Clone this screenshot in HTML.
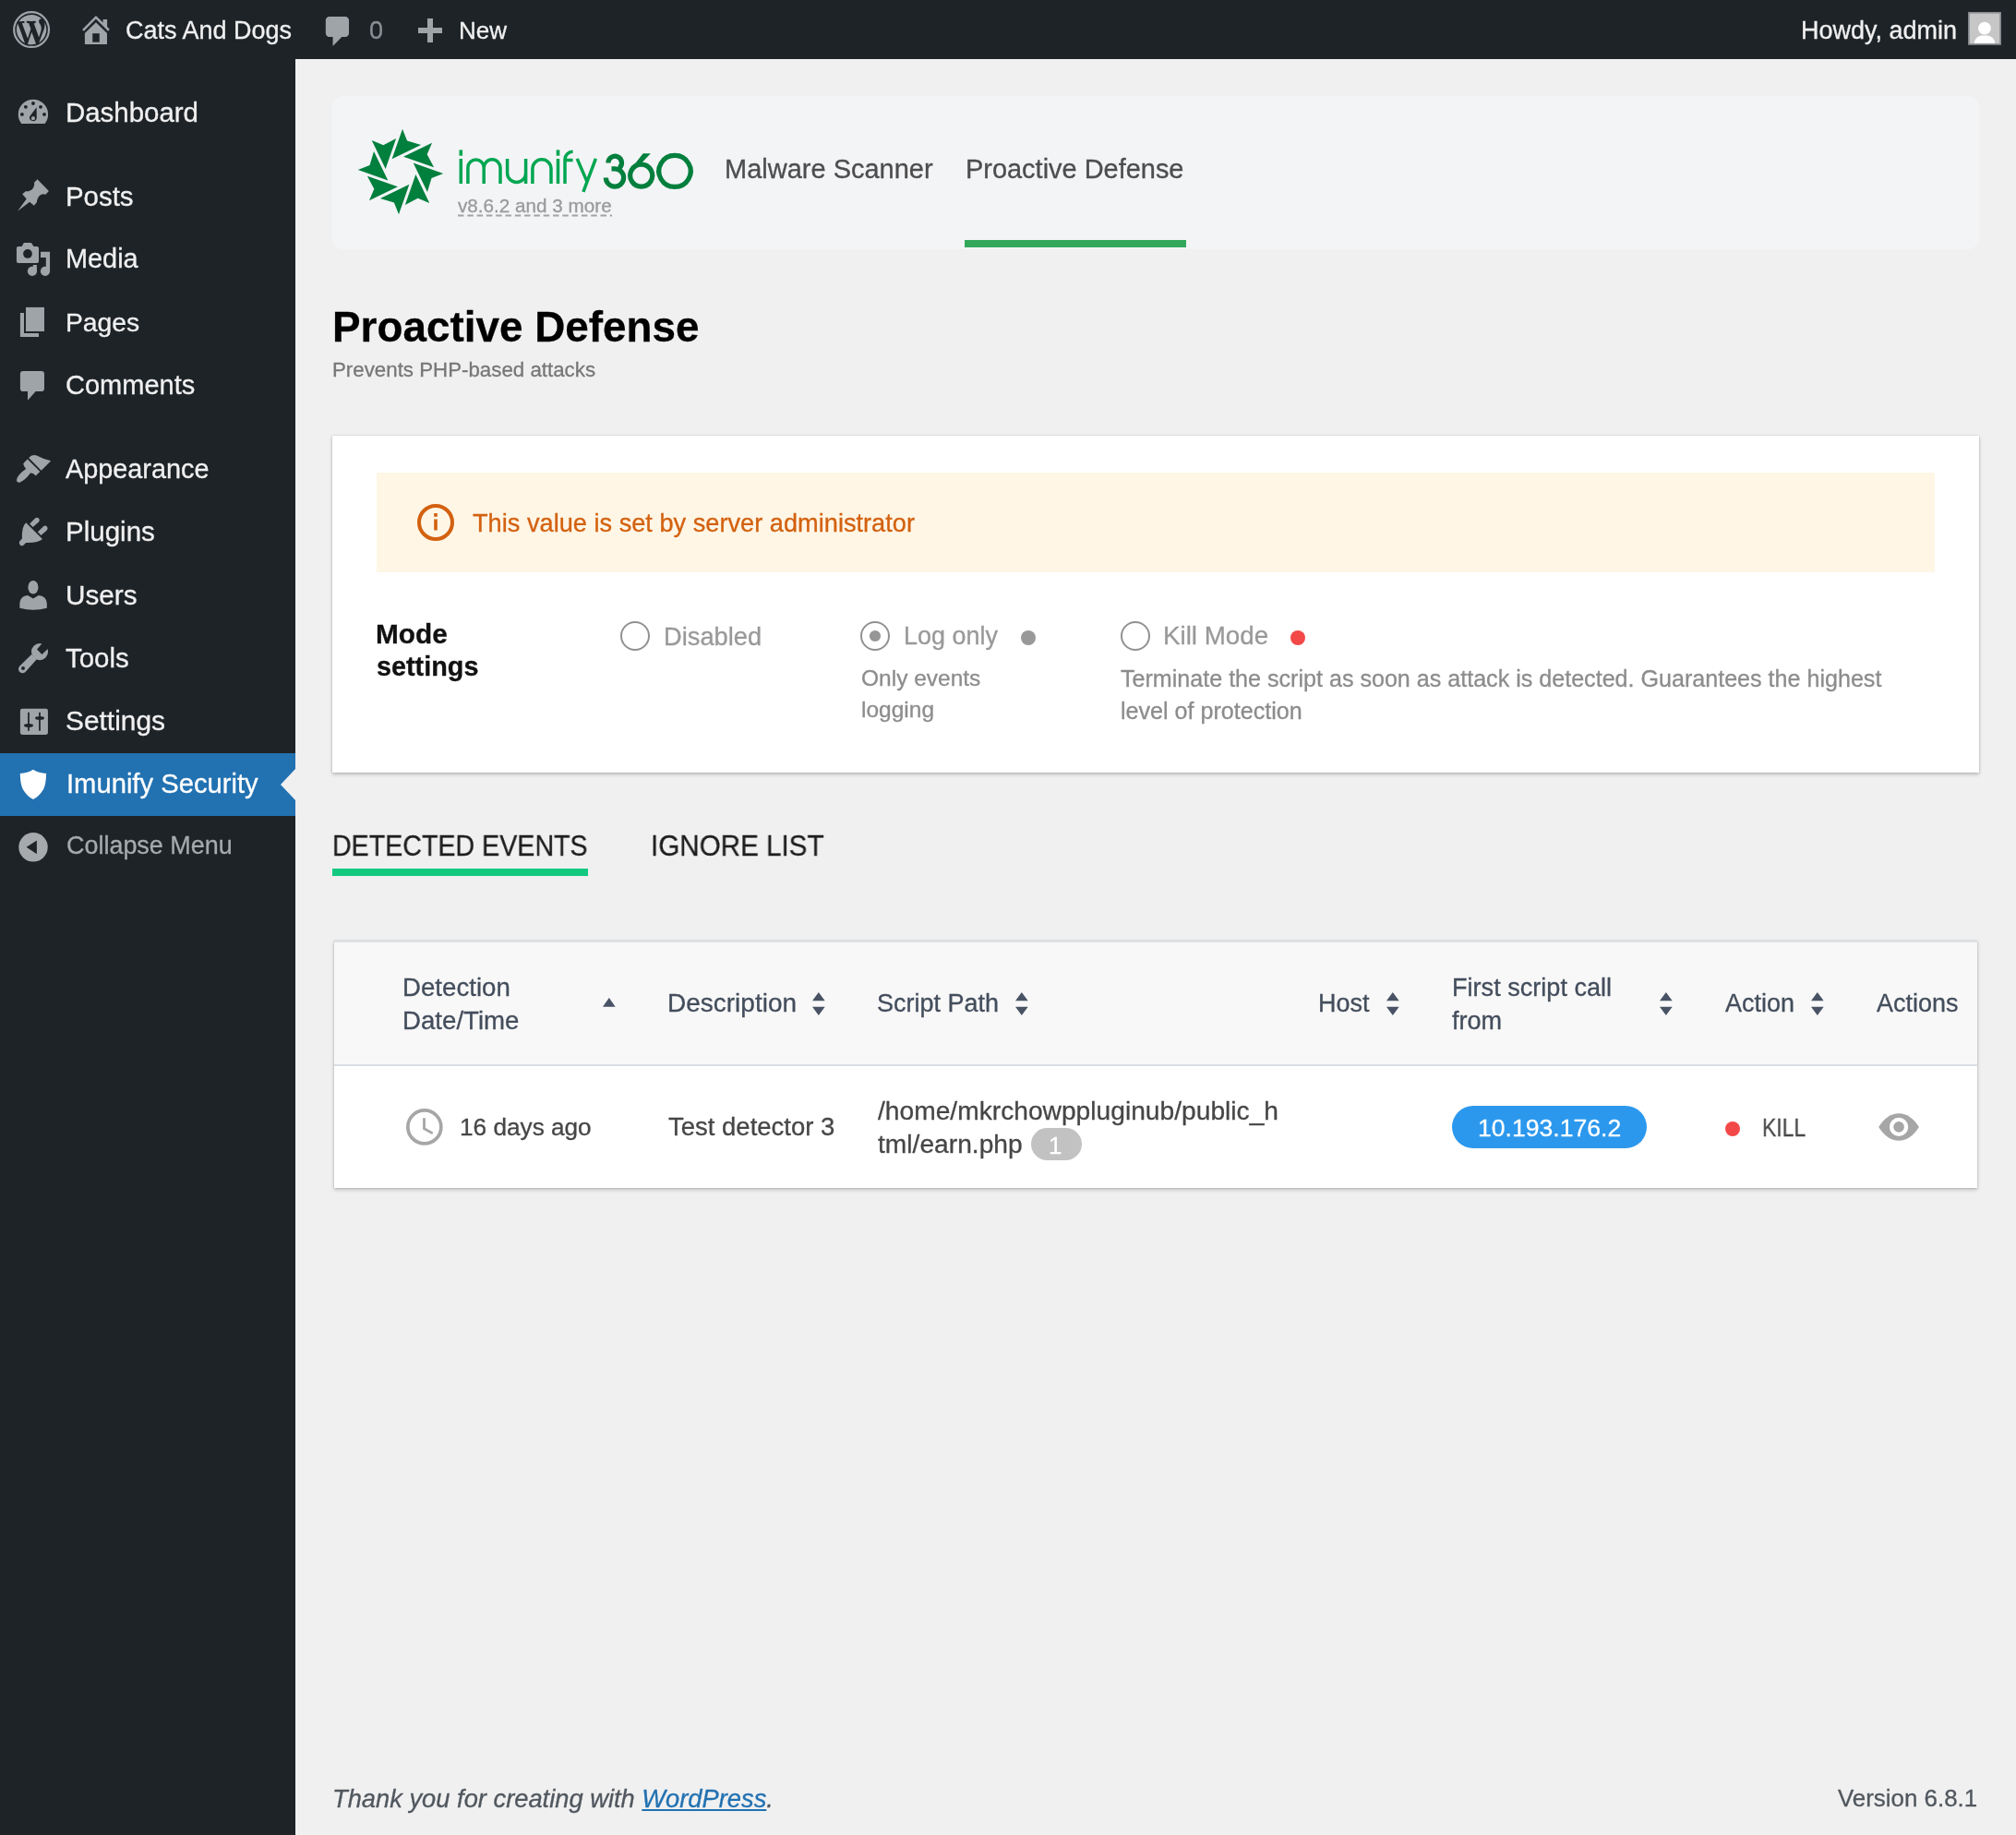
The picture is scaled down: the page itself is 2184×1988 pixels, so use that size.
<!DOCTYPE html>
<html><head><meta charset="utf-8"><title>Proactive Defense</title>
<style>
html,body{margin:0;padding:0;}
body{width:2184px;height:1988px;position:relative;overflow:hidden;background:#f0f0f1;font-family:"Liberation Sans",sans-serif;}
.t{position:absolute;white-space:nowrap;line-height:1;will-change:transform;-webkit-text-stroke:0.3px currentColor;}
.b{position:absolute;box-sizing:border-box;}
.i{position:absolute;overflow:visible;}
</style></head><body>
<div class="b" style="left:0px;top:0px;width:2184px;height:64px;background:#1d2327;"></div><svg class="i" style="left:13.8px;top:11.8px;" width="40.2" height="40.2" viewBox="0 0 20 20"><circle cx="10" cy="10" r="9.4" fill="none" stroke="#9fa4a9" stroke-width="1.12"/><path fill="#9fa4a9" transform="translate(10,10) scale(0.905) translate(-10,-10)" d="M7.78 15.37L4.37 6.22c.55-.02 1.17-.08 1.17-.08.5-.06.44-1.13-.06-1.11 0 0-1.45.11-2.37.11-.18 0-.37 0-.58-.01C4.12 2.69 6.87 1.11 10 1.11c2.33 0 4.45.87 6.05 2.34-.68-.11-1.65.39-1.65 1.58 0 .74.45 1.36.9 2.1.35.61.55 1.36.55 2.46 0 1.49-1.4 5-1.4 5l-3.03-8.37c.54-.02.82-.17.82-.17.5-.05.44-1.25-.06-1.22 0 0-1.44.12-2.38.12-.87 0-2.33-.12-2.33-.12-.5-.03-.56 1.2-.06 1.22l.92.08 1.26 3.41zM17.41 10c.24-.64.74-1.87.43-4.25.7 1.29 1.05 2.71 1.05 4.25 0 3.29-1.73 6.24-4.4 7.78.97-2.59 1.94-5.2 2.92-7.78zM6.1 18.09C3.12 16.65 1.11 13.53 1.11 10c0-1.3.23-2.48.72-3.59C3.25 10.3 4.67 14.2 6.1 18.09zM10.13 11.46l2.58 6.98c-.86.29-1.76.45-2.71.45-.79 0-1.57-.11-2.29-.33.81-2.38 1.62-4.74 2.42-7.1z"/></svg><svg class="i" style="left:78px;top:6px;" width="52" height="52" viewBox="0 0 1835 1835"><path fill="#9fa4a9" d="M915,385 L1185,655 L1185,525 L1345,525 L1345,815 L1440,910 L1380,980 L915,515 L455,980 L390,915 Z"/><path fill="#9fa4a9" d="M490,1060 L915,640 L1340,1060 L1340,1485 L490,1485 Z"/><rect fill="#1d2327" x="785" y="1065" width="265" height="335"/></svg><div class="t" style="left:136.0px;top:19.9px;font-size:27px;color:#f0f0f1;">Cats And Dogs</div><svg class="i" style="left:345px;top:14px;" width="40" height="40" viewBox="0 0 20 20"><path fill="#9fa4a9" d="M5 2h9c1.1 0 2 .9 2 2v7c0 1.1-.9 2-2 2h-2l-5 5v-5H5c-1.1 0-2-.9-2-2V4c0-1.1.9-2 2-2z" transform="translate(1,0) scale(0.97,1)"/></svg><div class="t" style="left:400.0px;top:20.1px;font-size:27px;color:#8c8f94;">0</div><div class="b" style="left:453px;top:30px;width:26px;height:6px;background:#9fa4a9;"></div><div class="b" style="left:463px;top:20px;width:6px;height:26px;background:#9fa4a9;"></div><div class="t" style="left:497.3px;top:20.0px;font-size:26px;color:#f0f0f1;">New</div><div class="t" style="right:64.4px;top:19.9px;font-size:27px;color:#f0f0f1;">Howdy, admin</div><svg class="i" style="left:2124px;top:6px;" width="52" height="52" viewBox="0 0 1835 1835"><rect x="285" y="245" width="1265" height="1265" fill="#8c8f94"/><rect x="345" y="305" width="1145" height="1145" fill="#c6c6c6"/><circle cx="915" cy="870" r="245" fill="#fff"/><path fill="#fff" d="M520,1450 Q540,1200 800,1150 L1030,1150 Q1290,1200 1320,1450 Z"/></svg><div class="b" style="left:0px;top:64px;width:320px;height:1924px;background:#1d2327;"></div><div class="b" style="left:0px;top:816px;width:320px;height:68.4px;background:#2271b1;"></div><svg class="i" style="left:304px;top:833px;" width="16" height="34" viewBox="0 0 16 34"><path fill="#f0f0f1" d="M16,0 L0,17 L16,34 Z"/></svg><div class="t" style="left:70.5px;top:107.1px;font-size:29.43px;color:#f0f0f1;">Dashboard</div><div class="t" style="left:70.5px;top:197.5px;font-size:29.43px;color:#f0f0f1;">Posts</div><div class="t" style="left:70.5px;top:266.4px;font-size:28.86px;color:#f0f0f1;">Media</div><div class="t" style="left:70.5px;top:335.2px;font-size:28.31px;color:#f0f0f1;">Pages</div><div class="t" style="left:70.5px;top:403.1px;font-size:29.0px;color:#f0f0f1;">Comments</div><div class="t" style="left:70.5px;top:493.6px;font-size:28.83px;color:#f0f0f1;">Appearance</div><div class="t" style="left:70.5px;top:561.4px;font-size:29.52px;color:#f0f0f1;">Plugins</div><div class="t" style="left:70.5px;top:629.7px;font-size:29.69px;color:#f0f0f1;">Users</div><div class="t" style="left:70.5px;top:698.3px;font-size:29.4px;color:#f0f0f1;">Tools</div><div class="t" style="left:70.5px;top:766.3px;font-size:29.89px;color:#f0f0f1;">Settings</div><div class="t" style="left:71.5px;top:835.3px;font-size:29.2px;color:#fff;">Imunify Security</div><div class="t" style="left:72.1px;top:903.2px;font-size:26.95px;color:#a7aaad;">Collapse Menu</div><svg class="i" style="left:10px;top:96px;" width="52" height="52" viewBox="0 0 1835 1835"><path fill="#9fa4a9" d="M469,1340 A570,570 0 1 1 1361,1340 Z"/><circle fill="#1d2327" cx="490" cy="985" r="68"/><circle fill="#1d2327" cx="630" cy="700" r="68"/><circle fill="#1d2327" cx="915" cy="565" r="68"/><circle fill="#1d2327" cx="1200" cy="700" r="68"/><circle fill="#1d2327" cx="1340" cy="985" r="68"/><path fill="#1d2327" d="M780,1070 L1045,715 L1050,1130 A135,135 0 1 1 780,1070 Z"/><circle fill="#9fa4a9" cx="915" cy="1135" r="72"/></svg><svg class="i" style="left:10px;top:186px;" width="52" height="52" viewBox="0 0 1835 1835"><path fill="#9fa4a9" d="M1075,290 L1515,745 L1390,870 Q1150,800 1060,1100 L1060,1160 L950,1300 L780,1160 L320,1505 L660,1040 L500,860 L640,740 L700,760 Q960,700 960,460 L950,420 Z"/></svg><svg class="i" style="left:10px;top:254px;" width="52" height="52" viewBox="0 0 1835 1835"><rect fill="#9fa4a9" x="280" y="460" width="850" height="635" rx="70"/><path fill="#9fa4a9" d="M470,480 L560,320 L840,320 L950,480 Z"/><circle fill="#1d2327" cx="705" cy="740" r="172"/><path fill="#9fa4a9" d="M1200,665 L1555,665 L1555,1420 L1405,1420 L1405,885 L1200,885 Z"/><circle fill="#9fa4a9" cx="1375" cy="1405" r="180"/><rect fill="#9fa4a9" x="910" y="1165" width="145" height="255"/><circle fill="#9fa4a9" cx="880" cy="1405" r="180"/></svg><svg class="i" style="left:10px;top:322px;" width="52" height="52" viewBox="0 0 1835 1835"><rect fill="#9fa4a9" x="635" y="385" width="705" height="920"/><path fill="#9fa4a9" d="M420,600 L565,600 L565,1380 L1130,1380 L1130,1520 L420,1520 Z"/></svg><svg class="i" style="left:10px;top:390px;" width="52" height="52" viewBox="0 0 1835 1835"><rect fill="#9fa4a9" x="420" y="420" width="920" height="780" rx="110"/><path fill="#9fa4a9" d="M705,1150 L705,1545 L1060,1150 Z"/></svg><svg class="i" style="left:10px;top:480px;" width="52" height="52" viewBox="0 0 1835 1835"><path fill="#9fa4a9" d="M745,565 Q860,420 1050,475 Q1300,610 1595,680 L1225,1050 Z"/><path fill="#9fa4a9" d="M700,615 L1175,1090 L1010,1255 Q930,1135 810,1150 Q620,1420 400,1505 Q270,1520 285,1395 Q330,1200 640,990 Q560,900 535,790 Q600,700 700,615 Z"/></svg><svg class="i" style="left:10px;top:548px;" width="52" height="52" viewBox="0 0 1835 1835"><path fill="#9fa4a9" d="M640,645 L1270,1270 Q1100,1425 640,1410 L530,1520 Q420,1560 380,1430 Q375,1360 490,1265 Q470,800 640,645 Z"/><path fill="#9fa4a9" d="M780,690 L990,480 Q1070,410 1140,490 Q1190,560 1120,630 L905,815 Z"/><path fill="#9fa4a9" d="M1090,1000 L1300,790 Q1380,720 1450,800 Q1500,870 1430,940 L1215,1125 Z"/></svg><svg class="i" style="left:10px;top:616px;" width="52" height="52" viewBox="0 0 1835 1835"><ellipse fill="#9fa4a9" cx="915" cy="715" rx="195" ry="258"/><path fill="#9fa4a9" d="M400,1510 L400,1320 Q420,1050 710,1020 L915,1150 L1120,1020 Q1420,1050 1440,1320 L1440,1510 Q915,1650 400,1510 Z"/></svg><svg class="i" style="left:10px;top:684px;" width="52" height="52" viewBox="0 0 1835 1835"><circle fill="#9fa4a9" cx="1165" cy="780" r="320"/><path fill="#1d2327" d="M1290,420 L1060,690 L1250,880 L1520,630 Z"/><path fill="#9fa4a9" d="M850,880 L1045,1075 L610,1560 Q480,1650 375,1525 Q310,1400 440,1290 Z"/><circle fill="#1d2327" cx="530" cy="1410" r="68"/></svg><svg class="i" style="left:10px;top:752px;" width="52" height="52" viewBox="0 0 1835 1835"><rect fill="#9fa4a9" x="420" y="560" width="1060" height="990" rx="75"/><rect fill="#1d2327" x="710" y="700" width="62" height="700" rx="10"/><ellipse fill="#1d2327" cx="740" cy="1200" rx="175" ry="68"/><rect fill="#1d2327" x="1133" y="700" width="62" height="700" rx="10"/><ellipse fill="#1d2327" cx="1165" cy="915" rx="175" ry="68"/></svg><svg class="i" style="left:10px;top:824px;" width="52" height="52" viewBox="0 0 1835 1835"><path fill="#fff" d="M915,345 Q700,480 415,495 Q420,900 520,1090 Q680,1360 915,1485 Q1150,1360 1310,1090 Q1410,900 1415,495 Q1130,480 915,345 Z"/></svg><svg class="i" style="left:10px;top:891px;" width="52" height="52" viewBox="0 0 1835 1835"><circle fill="#a7aaad" cx="918" cy="945" r="555"/><path fill="#1d2327" d="M655,945 L1055,690 L1055,1210 Z"/></svg><div class="b" style="left:360px;top:104px;width:1784px;height:165.6px;background:#f3f4f6;border-radius:12px;"></div><div class="b" style="left:1044.7px;top:259.9px;width:240px;height:7.9px;background:#34a85a;"></div><svg class="i" style="left:383.71px;top:136.41px;" width="100" height="100" viewBox="-50 -50 100 100"><g fill="#007f3d"><path d="M2.01,-46.2 L7.06,-33.48 L22.1,-28.97 L-9.4,-13.7 Z" transform="rotate(0)"/><path d="M2.01,-46.2 L7.06,-33.48 L22.1,-28.97 L-9.4,-13.7 Z" transform="rotate(45)"/><path d="M2.01,-46.2 L7.06,-33.48 L22.1,-28.97 L-9.4,-13.7 Z" transform="rotate(90)"/><path d="M2.01,-46.2 L7.06,-33.48 L22.1,-28.97 L-9.4,-13.7 Z" transform="rotate(135)"/><path d="M2.01,-46.2 L7.06,-33.48 L22.1,-28.97 L-9.4,-13.7 Z" transform="rotate(180)"/><path d="M2.01,-46.2 L7.06,-33.48 L22.1,-28.97 L-9.4,-13.7 Z" transform="rotate(225)"/><path d="M2.01,-46.2 L7.06,-33.48 L22.1,-28.97 L-9.4,-13.7 Z" transform="rotate(270)"/><path d="M2.01,-46.2 L7.06,-33.48 L22.1,-28.97 L-9.4,-13.7 Z" transform="rotate(315)"/></g></svg><svg class="i" style="left:0px;top:0px;pointer-events:none;" width="2184" height="300" viewBox="0 0 2184 300"><path d="M499.3,171.9 V198.9 M506.9,198.9 V181.7 A8.65,8.65 0 0 1 524.2,181.7 V198.9 M524.2,181.7 A8.9,8.9 0 0 1 542,181.7 V198.9 M549.6,171.9 V187.5 A10,10 0 0 0 569.6,187.5 M569.6,171.9 V198.9 M576.9,198.9 V182.9 A10.05,10.05 0 0 1 597,182.9 V198.9 M604.5,171.9 V198.9 M612,198.9 V172.8 A8.6,8.6 0 0 1 620.6,164.2 M613,173.5 H620.6 M625.2,171.9 L636.2,197.4 M645.4,171.9 L631.9,207.9" fill="none" stroke="#00a651" stroke-width="3.5"/><g fill="#00a651"><rect x="497.5" y="162.4" width="3.6" height="6.3"/><rect x="602.7" y="162.4" width="3.6" height="6.3"/></g><path d="M658.9,176.5 A7.3,7.3 0 1 1 670.9,182.1 M662.5,182.8 H667 M666,182.8 A9.65,9.65 0 1 1 656.35,192.4 M694.7,178.1 A12,12 0 1 0 694.71,178.1 M731,168.45 A17.2,17 0 1 0 731.01,168.45" fill="none" stroke="#007f3d" stroke-width="5.2"/><path fill="#007f3d" d="M696.7,166.2 L704.8,166.2 L696.2,175.6 L686,183 L680.6,186.5 Z"/></svg><div class="t" style="left:496.0px;top:212.5px;font-size:20.7px;color:#9a9a9a;">v8.6.2 and 3 more</div><svg class="i" style="left:496px;top:231.6px;" width="167" height="3" viewBox="0 0 167 3"><line x1="0" y1="1.5" x2="167" y2="1.5" stroke="#a3a3a3" stroke-width="1.8" stroke-dasharray="6.5,3.8"/></svg><div class="t" style="left:785.0px;top:168.9px;font-size:29.0px;color:#4d4d4d;">Malware Scanner</div><div class="t" style="left:1046.0px;top:168.9px;font-size:28.95px;color:#4d4d4d;">Proactive Defense</div><div class="t" style="left:359.6px;top:331.9px;font-size:45.85px;color:#000;font-weight:700;">Proactive Defense</div><div class="t" style="left:360.0px;top:390.0px;font-size:22.3px;color:#777;">Prevents PHP-based attacks</div><div class="b" style="left:360px;top:472px;width:1784px;height:365px;background:#fff;box-shadow:0 0 1.5px rgba(0,0,0,0.22), 0 2px 4px rgba(0,0,0,0.22);"></div><div class="b" style="left:408px;top:512px;width:1688px;height:108px;background:#fff6e6;"></div><svg class="i" style="left:450px;top:544px;" width="44" height="44" viewBox="0 0 44 44"><circle cx="22" cy="22" r="18" fill="none" stroke="#d3610f" stroke-width="4"/><rect x="20.2" y="18.5" width="3.6" height="12" fill="#d3610f"/><rect x="20.2" y="12" width="3.6" height="3.8" fill="#d3610f"/></svg><div class="t" style="left:511.5px;top:553.3px;font-size:27.2px;color:#d3610f;">This value is set by server administrator</div><div class="t" style="left:407.2px;top:671.8px;font-size:29.8px;color:#111;font-weight:700;">Mode</div><div class="t" style="left:408.2px;top:707.6px;font-size:28.8px;color:#111;font-weight:700;">settings</div><svg class="i" style="left:668px;top:668.9px;" width="40" height="40" viewBox="0 0 40 40"><circle cx="20" cy="20" r="15" fill="#fff" stroke="#919191" stroke-width="2"/></svg><svg class="i" style="left:928px;top:668.9px;" width="40" height="40" viewBox="0 0 40 40"><circle cx="20" cy="20" r="15" fill="#fff" stroke="#919191" stroke-width="2"/><circle cx="20" cy="20" r="6.1" fill="#969696"/></svg><svg class="i" style="left:1210px;top:669.3px;" width="40" height="40" viewBox="0 0 40 40"><circle cx="20" cy="20" r="15" fill="#fff" stroke="#919191" stroke-width="2"/></svg><div class="t" style="left:718.8px;top:675.6px;font-size:27.3px;color:#999;">Disabled</div><div class="t" style="left:979.0px;top:675.9px;font-size:26.95px;color:#999;">Log only</div><div class="t" style="left:1260.0px;top:675.2px;font-size:27.75px;color:#999;">Kill Mode</div><div class="b" style="left:1106px;top:683px;width:16px;height:16px;background:#999;border-radius:50%;"></div><div class="b" style="left:1398px;top:683px;width:16px;height:16px;background:#f24848;border-radius:50%;"></div><div class="t" style="left:932.6px;top:722.6px;font-size:24.5px;color:#8c8c8c;">Only events</div><div class="t" style="left:932.6px;top:756.5px;font-size:24.5px;color:#8c8c8c;">logging</div><div class="t" style="left:1214.0px;top:722.8px;font-size:25.1px;color:#8c8c8c;">Terminate the script as soon as attack is detected. Guarantees the highest</div><div class="t" style="left:1214.0px;top:758.4px;font-size:25.1px;color:#8c8c8c;">level of protection</div><div class="t" style="left:360.4px;top:899.8px;font-size:32px;color:#1e1e1e;transform:scaleX(0.894);transform-origin:left top;">DETECTED EVENTS</div><div class="t" style="left:704.6px;top:899.8px;font-size:32px;color:#1e1e1e;transform:scaleX(0.925);transform-origin:left top;">IGNORE LIST</div><div class="b" style="left:360px;top:941.4px;width:277px;height:7.6px;background:#13c97f;"></div><div class="b" style="left:362px;top:1019.2px;width:1780px;height:268px;background:#fff;box-shadow:0 0 1.5px rgba(0,0,0,0.22), 0 2px 4px rgba(0,0,0,0.22);"></div><div class="b" style="left:362px;top:1019.2px;width:1780px;height:2px;background:#dde1e6;"></div><div class="b" style="left:362px;top:1021.2px;width:1780px;height:131.9px;background:#f8f8f8;"></div><div class="b" style="left:362px;top:1153.1px;width:1780px;height:2px;background:#dbdfe4;"></div><div class="t" style="left:435.8px;top:1055.8px;font-size:27.65px;color:#434d5c;">Detection</div><div class="t" style="left:435.8px;top:1091.6px;font-size:27.65px;color:#434d5c;">Date/Time</div><div class="t" style="left:723.0px;top:1073.3px;font-size:28.0px;color:#434d5c;">Description</div><div class="t" style="left:950.0px;top:1074.1px;font-size:27.0px;color:#434d5c;">Script Path</div><div class="t" style="left:1428.0px;top:1074.3px;font-size:27.0px;color:#434d5c;">Host</div><div class="t" style="left:1572.6px;top:1055.9px;font-size:27.1px;color:#434d5c;">First script call</div><div class="t" style="left:1572.6px;top:1091.6px;font-size:27.1px;color:#434d5c;">from</div><div class="t" style="left:1869.0px;top:1074.0px;font-size:27px;color:#434d5c;">Action</div><div class="t" style="left:2032.6px;top:1074.0px;font-size:27.0px;color:#434d5c;">Actions</div><svg class="i" style="left:653.35px;top:1081.4px;" width="13.7" height="9.7" viewBox="0 0 13.7 9.7"><path fill="#495365" d="M0,9.7 L6.85,0 L13.7,9.7 Z"/></svg><svg class="i" style="left:880.15px;top:1074.5px;" width="13.7" height="24.9" viewBox="0 0 13.7 24.9"><path fill="#495365" d="M0,9.2 L6.85,0 L13.7,9.2 Z M0,15.7 L13.7,15.7 L6.85,24.9 Z"/></svg><svg class="i" style="left:1099.65px;top:1074.5px;" width="13.7" height="24.9" viewBox="0 0 13.7 24.9"><path fill="#495365" d="M0,9.2 L6.85,0 L13.7,9.2 Z M0,15.7 L13.7,15.7 L6.85,24.9 Z"/></svg><svg class="i" style="left:1502.15px;top:1074.5px;" width="13.7" height="24.9" viewBox="0 0 13.7 24.9"><path fill="#495365" d="M0,9.2 L6.85,0 L13.7,9.2 Z M0,15.7 L13.7,15.7 L6.85,24.9 Z"/></svg><svg class="i" style="left:1798.3500000000001px;top:1074.5px;" width="13.7" height="24.9" viewBox="0 0 13.7 24.9"><path fill="#495365" d="M0,9.2 L6.85,0 L13.7,9.2 Z M0,15.7 L13.7,15.7 L6.85,24.9 Z"/></svg><svg class="i" style="left:1962.15px;top:1074.5px;" width="13.7" height="24.9" viewBox="0 0 13.7 24.9"><path fill="#495365" d="M0,9.2 L6.85,0 L13.7,9.2 Z M0,15.7 L13.7,15.7 L6.85,24.9 Z"/></svg><svg class="i" style="left:434px;top:1195px;" width="52" height="52" viewBox="0 0 1835 1835"><circle cx="912" cy="915" r="635" fill="none" stroke="#a6a6a6" stroke-width="130"/><path d="M900,570 L900,975 L1225,1160" fill="none" stroke="#a6a6a6" stroke-width="100" stroke-linejoin="miter"/></svg><div class="t" style="left:497.6px;top:1207.8px;font-size:26.2px;color:#464646;">16 days ago</div><div class="t" style="left:724.0px;top:1206.7px;font-size:27.5px;color:#464646;">Test detector 3</div><div class="t" style="left:951.0px;top:1189.1px;font-size:28.2px;color:#464646;">/home/mkrchowppluginub/public_h</div><div class="t" style="left:951.0px;top:1224.9px;font-size:28.2px;color:#464646;">tml/earn.php</div><div class="b" style="left:1117px;top:1221.5px;width:54.5px;height:35.5px;background:#c2c2c2;border-radius:18px;"></div><div class="t" style="left:1136.0px;top:1227.5px;font-size:26px;color:#fff;">1</div><div class="b" style="left:1573px;top:1197.7px;width:211.4px;height:46.6px;background:#2b98ee;border-radius:23.3px;"></div><div class="t" style="left:1601.4px;top:1208.5px;font-size:26.6px;color:#fff;">10.193.176.2</div><div class="b" style="left:1869px;top:1215px;width:16px;height:16px;background:#f24848;border-radius:50%;"></div><div class="t" style="left:1908.8px;top:1208.9px;font-size:27px;color:#4a4a4a;transform:scaleX(0.85);transform-origin:left top;">KILL</div><svg class="i" style="left:2026px;top:1196px;" width="62" height="52" viewBox="0 0 2016 1691"><path fill="#a6a6a6" d="M300,810 Q600,330 1010,330 Q1420,330 1720,810 Q1420,1290 1010,1290 Q600,1290 300,810 Z"/><circle cx="1010" cy="810" r="330" fill="#fff"/><circle cx="1010" cy="810" r="190" fill="#a6a6a6"/></svg><div class="t" style="left:360.0px;top:1935.2px;font-size:27.3px;color:#50575e;font-style:italic;">Thank you for creating with <span style="color:#2271b1;text-decoration:underline;">WordPress</span>.</div><div class="t" style="right:41.7px;top:1935.8px;font-size:25.9px;color:#50575e;">Version 6.8.1</div></body></html>
